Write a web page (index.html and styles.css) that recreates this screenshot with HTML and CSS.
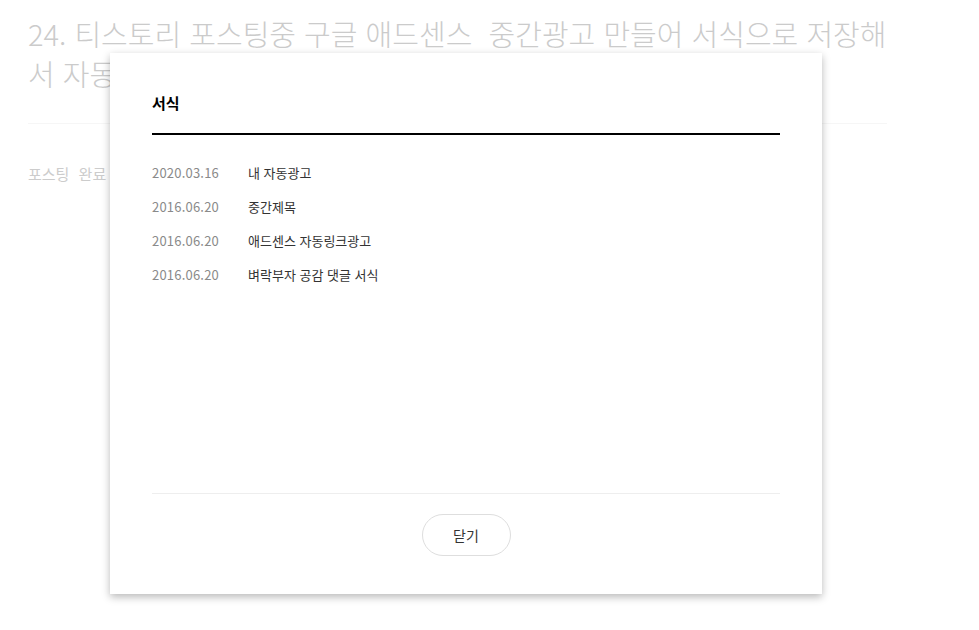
FILE: index.html
```html
<!DOCTYPE html>
<html lang="ko">
<head>
<meta charset="utf-8">
<title>서식</title>
<link rel="stylesheet" href="styles.css">
</head>
<body>
<div class="page">
  <h1 class="post-title">24. 티스토리 포스팅중 구글 애드센스&nbsp; 중간광고 만들어 서식으로 저장해서 자동으로 넣기</h1>
  <hr class="post-rule">
  <p class="post-status">포스팅 완료</p>
</div>

<div class="modal">
  <div class="modal-head">
    <h2 class="modal-title">서식</h2>
  </div>
  <ul class="tpl-list">
    <li class="tpl-row"><span class="tpl-date">2020.03.16</span><span class="tpl-name">내 자동광고</span></li>
    <li class="tpl-row"><span class="tpl-date">2016.06.20</span><span class="tpl-name">중간제목</span></li>
    <li class="tpl-row"><span class="tpl-date">2016.06.20</span><span class="tpl-name">애드센스 자동링크광고</span></li>
    <li class="tpl-row"><span class="tpl-date">2016.06.20</span><span class="tpl-name">벼락부자 공감 댓글 서식</span></li>
  </ul>
  <div class="modal-foot">
    <button class="btn-close" type="button">닫기</button>
  </div>
</div>
</body>
</html>
```

FILE: styles.css
```css
* { box-sizing: border-box; }
html, body {
  margin: 0;
  padding: 0;
  background: #fff;
  font-family: "Noto Sans CJK KR", "Noto Sans", sans-serif;
}
.page {
  width: 887px;
  padding: 13px 0 0 28px;
}
.post-title {
  margin: 0;
  font-size: 29px;
  line-height: 40px;
  font-weight: 300;
  color: #cbcbcb;
}
.post-rule {
  margin: 30px 0 0 0;
  border: 0;
  border-top: 1px solid #f6f6f6;
  height: 0;
}
.post-status {
  margin: 40px 0 0 0;
  font-size: 15px;
  line-height: 20px;
  color: #cccccc;
  word-spacing: 5px;
}

.modal {
  position: absolute;
  left: 110px;
  top: 53px;
  width: 712px;
  height: 541px;
  background: #fff;
  box-shadow: 0 3px 8px rgba(0, 0, 0, 0.28);
  padding: 0 42px 38px;
  display: flex;
  flex-direction: column;
}
.modal-head {
  padding: 38px 0 18px;
  border-bottom: 2px solid #000;
}
.modal-title {
  margin: 0;
  font-size: 15px;
  line-height: 24px;
  font-weight: 700;
  color: #000;
}
.tpl-list {
  list-style: none;
  margin: 20px 0 0;
  padding: 0;
  flex: 1;
}
.tpl-row {
  display: flex;
  height: 34px;
  align-items: center;
  font-size: 13px;
}
.tpl-date {
  width: 96px;
  color: #8a8a8a;
  letter-spacing: 0.2px;
}
.tpl-name {
  color: #333;
}
.modal-foot {
  border-top: 1px solid #eeeeee;
  padding-top: 20px;
  display: flex;
  justify-content: center;
}
.btn-close {
  width: 89px;
  height: 42px;
  border: 1px solid #dedede;
  border-radius: 21px;
  background: #fff;
  font-family: inherit;
  font-size: 14px;
  color: #333;
  padding: 0;
}
```
